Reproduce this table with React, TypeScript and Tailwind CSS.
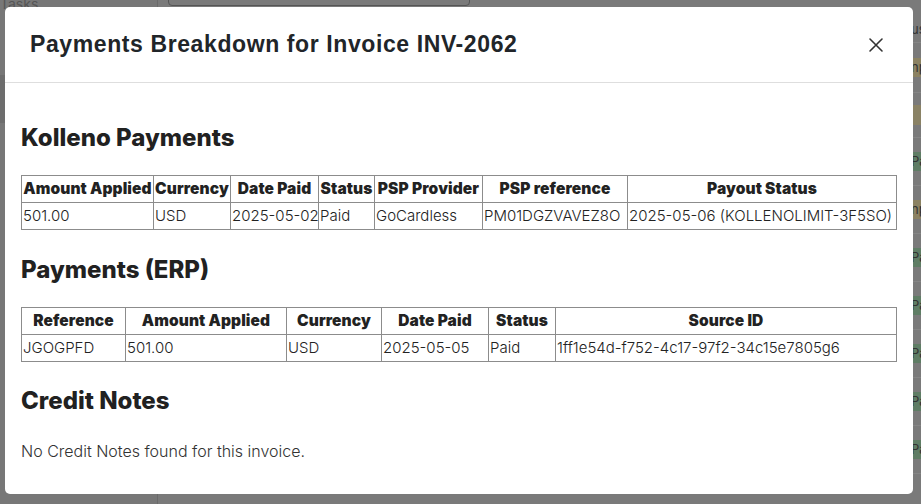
import React from "react";

const kollenoCols = [132, 77, 88, 56, 108, 145, 269];
const kollenoHead = ["Amount Applied", "Currency", "Date Paid", "Status", "PSP Provider", "PSP reference", "Payout Status"];
const kollenoRow = ["501.00", "USD", "2025-05-02", "Paid", "GoCardless", "PM01DGZVAVEZ8O", "2025-05-06 (KOLLENOLIMIT-3F5SO)"];

const erpCols = [104, 161, 95, 107, 67, 341];
const erpHead = ["Reference", "Amount Applied", "Currency", "Date Paid", "Status", "Source ID"];
const erpRow = ["JGOGPFD", "501.00", "USD", "2025-05-05", "Paid", "1ff1e54d-f752-4c17-97f2-34c15e7805g6"];

function DataTable({ cols, head, row }: { cols: number[]; head: string[]; row: string[] }) {
  return (
    <table className="w-full table-fixed border-collapse border border-[#8c8c8c] text-[#222]">
      <colgroup>
        {cols.map((w, i) => (
          <col key={i} style={{ width: w }} />
        ))}
      </colgroup>
      <thead>
        <tr className="h-[27px]">
          {head.map((h) => (
            <th key={h} className="border border-[#8c8c8c] px-[1px] text-center text-[15.5px] font-black tracking-[0.1px] whitespace-nowrap">
              {h}
            </th>
          ))}
        </tr>
      </thead>
      <tbody>
        <tr className="h-[27px]">
          {row.map((c, i) => (
            <td key={i} className="border border-[#8c8c8c] px-[1px] text-left text-[15px] font-light whitespace-nowrap">
              {c}
            </td>
          ))}
        </tr>
      </tbody>
    </table>
  );
}

const rightRows = [
  { h: 25, bg: "", t: "us" },
  { h: 50, bg: "bg-[#8b8262]", t: "np" },
  { h: 45, bg: "bg-[#8a8265]", t: "" },
  { h: 48, bg: "bg-[#5f7d65]", t: "Pa" },
  { h: 48, bg: "bg-[#8b8262]", t: "np" },
  { h: 48, bg: "bg-[#5f7d65]", t: "Pa" },
  { h: 48, bg: "bg-[#5f7d65]", t: "Pa" },
  { h: 48, bg: "bg-[#5f7d65]", t: "Pa" },
  { h: 48, bg: "bg-[#5f7d65]", t: "Pa" },
  { h: 48, bg: "bg-[#5f7d65]", t: "Pa" },
];

export default function App() {
  return (
    <div className="relative h-[504px] w-[921px] overflow-hidden bg-[#7a7a7a]" style={{ fontFamily: "Inter, 'Liberation Sans', sans-serif" }}>
      {/* dimmed background app */}
      <div className="flex h-full">
        <div className="flex w-[158px] flex-col border-r border-[#6a6a6a] bg-[#777]">
          <div className="h-[7px] overflow-visible pl-0 text-[14px] leading-[8px] text-[#555]">Tasks</div>
          <div className="mt-[68px] h-[48px] bg-[#6d6d6d]" />
        </div>
        <div className="flex flex-1 flex-col">
          <div className="ml-[10px] mt-[-10px] h-[16px] w-[302px] rounded-[4px] border border-[#555]" />
          <div className="ml-auto flex w-[10px] flex-col pt-[12px]">
            {rightRows.map((r, i) => (
              <div key={i} style={{ height: r.h }} className="flex items-center border-b border-[#858585]">
                <div className={`${r.bg} w-full text-[13px] text-[#333]`}>{r.t || "\u00a0"}</div>
              </div>
            ))}
          </div>
        </div>
      </div>

      {/* modal */}
      <div className="absolute left-[5px] top-[7px] flex h-[487px] w-[908px] flex-col rounded-[5px] bg-white">
        <div className="flex h-[76px] items-center justify-between border-b border-[#dedede] pl-[25px] pr-[27px]">
          <h1 className="text-[23px] font-bold tracking-[0.6px] text-[#212529]" style={{ fontFamily: "'Liberation Sans', Arial, sans-serif" }}>
            Payments Breakdown for Invoice INV-2062
          </h1>
          <button className="flex h-[20px] w-[20px] items-center justify-center text-[#333]">
            <svg width="16" height="16" viewBox="0 0 16 16" fill="none" stroke="currentColor" strokeWidth="1.6" strokeLinecap="round">
              <path d="M2 2L14 14M14 2L2 14" />
            </svg>
          </button>
        </div>
        <div className="flex flex-col px-[16px] pt-[40px] text-[#212121]">
          <h2 className="text-[24px] leading-[29px] font-extrabold">Kolleno Payments</h2>
          <div className="mt-[23px]">
            <DataTable cols={kollenoCols} head={kollenoHead} row={kollenoRow} />
          </div>
          <h2 className="mt-[25px] text-[24px] leading-[29px] font-extrabold">Payments (ERP)</h2>
          <div className="mt-[23px]">
            <DataTable cols={erpCols} head={erpHead} row={erpRow} />
          </div>
          <h2 className="mt-[24px] text-[24px] leading-[29px] font-extrabold">Credit Notes</h2>
          <p className="mt-[24px] text-[16px] leading-[24px] font-light text-[#333]">No Credit Notes found for this invoice.</p>
        </div>
      </div>
    </div>
  );
}
